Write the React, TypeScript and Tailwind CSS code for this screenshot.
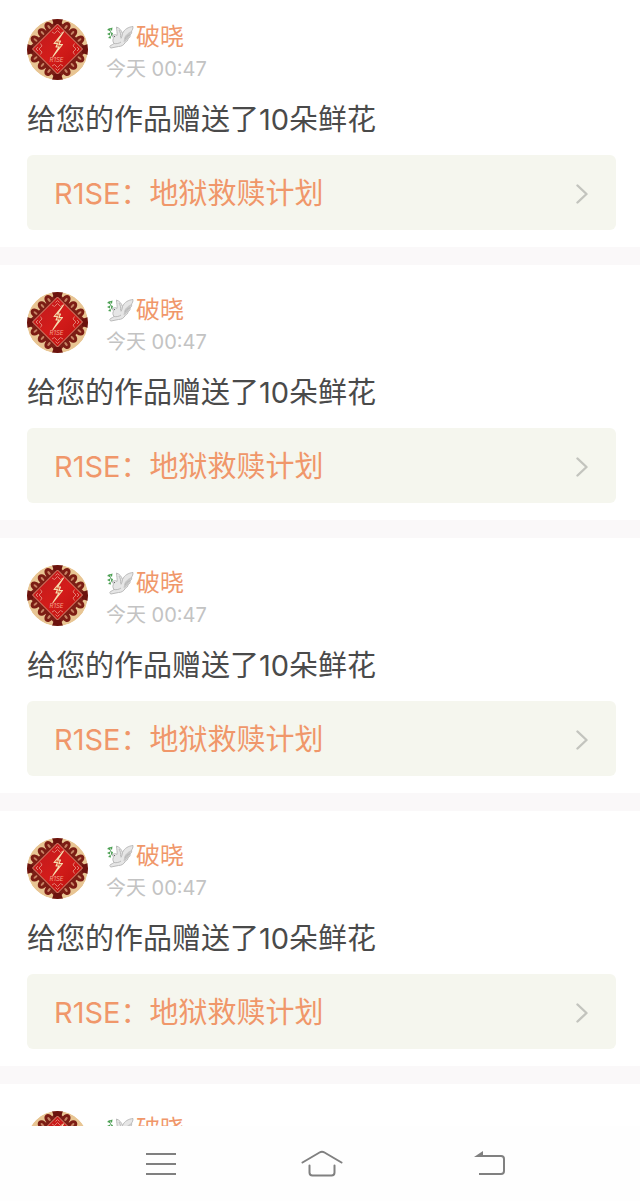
import React from 'react';

type Gift = {
  id: number;
  user: string;
  time: string;
  message: string;
  work: string;
};

const gifts: Gift[] = [1, 2, 3, 4, 5].map((id) => ({
  id,
  user: '破晓',
  time: '今天 00:47',
  message: '给您的作品赠送了10朵鲜花',
  work: 'R1SE：地狱救赎计划',
}));

// loops of the knot that stick out from the four sides of the diamond
const loops = [
  [22, 8, -38], [15.5, 14, -45], [8.5, 21, -52],
  [39, 8, 38], [45.5, 14, 45], [52.5, 21, 52],
  [8.5, 39, 52], [15.5, 46, 45], [22, 52, 38],
  [52.5, 39, -52], [45.5, 46, -45], [39, 52, -38],
];

const Avatar = () => (
  <svg viewBox="0 0 61 61" className="h-[61px] w-[61px] shrink-0 rounded-full" aria-hidden="true">
    <defs>
      <linearGradient id="lacquer" x1="0" y1="0" x2="1" y2="1">
        <stop offset="0" stopColor="#bd1a1d" />
        <stop offset="0.5" stopColor="#d31c1a" />
        <stop offset="1" stopColor="#bb100e" />
      </linearGradient>
    </defs>
    <circle cx="30.5" cy="30.5" r="30.5" fill="#e8c593" />
    <path d="M30.5 0 61 30.5 30.5 61 0 30.5Z" fill="#7c2018" />
    {loops.map(([x, y, turn]) => (
      <ellipse
        key={`${x}-${y}`}
        rx="2.6"
        ry="3.8"
        fill="#c58263"
        stroke="#7c1d14"
        strokeWidth="3"
        transform={`translate(${x} ${y}) rotate(${turn})`}
      />
    ))}
    <path d="M25 0h11l-2 6h-7ZM25 61h11l-2-6h-7ZM0 25v11l6-2v-7ZM61 25v11l-6-2v-7Z" fill="#6b120e" />
    <path d="M30.500 5 55.500 30 30.500 55 5.500 30Z" fill="url(#lacquer)" stroke="#dc8f76" strokeWidth="1" />
    <g fill="none" stroke="#e28a7c" strokeWidth="0.900">
      <path d="m25 13 2.500 1.500 3-3 3 3L36 13M28.500 10.500l2-2 2 2" />
      <path d="m13.500 24.500 1.500 2.500-3 3 3 3-1.500 2.500M11 28l-2 2 2 2" />
      <path d="m47.500 24.500-1.500 2.500 3 3-3 3 1.500 2.500M50 28l2 2-2 2" />
      <path d="m25 47 2.500-1.500 3 3 3-3L36 47M28.500 49.500l2 2 2-2" />
    </g>
    <path
      d="M36.500 13 27 24.500h3.500L29 28h3L26 37.500l9.500-12H32l1.500-3.500h-3Z"
      fill="#d9603f"
      stroke="#f6dcae"
      strokeWidth="1.100"
      strokeLinejoin="round"
    />
    <text x="29.500" y="43" textAnchor="middle" fontSize="6" fontStyle="italic" fontFamily="Inter, sans-serif" fill="#f6a58c">
      R1SE
    </text>
  </svg>
);

const Dove = () => (
  <svg viewBox="0 0 28 24" className="h-6 w-7 shrink-0" aria-hidden="true">
    <path d="M2 4c2 1 3 3 4 7" fill="none" stroke="#4f9a5a" strokeWidth="1" />
    <path d="M1 5 3.500 3l1 3ZM3.500 3.500l3-1L6 6ZM1 9l3-1.500v3ZM5 7.500l2 .5-1 3ZM2 13l2.500-2.500.5 3Z" fill="#4ba052" />
    <path
      d="M6 11.500c1-2 3.500-2.500 5-1 .5-3-.5-5-.5-8.500 3 1 5 3.500 6 6.500C18.500 4 22.500 2 27 1.500c0 2-.5 3.500-1.500 4.500.5 1.500 0 3-1.500 4 .5 1.500-.5 3-2 3.500 0 2-1 3-2.500 3.500-1.500 3-4 4.500-7 4.500L5 23c-1.500-.5-1.500-1.500-.5-2.500 1-.5 2.500-1 3.500-2C6.500 16.500 6.500 14 8 12.500Z"
      fill="#e6e6e6"
      stroke="#b4b4b4"
      strokeWidth="0.900"
      strokeLinejoin="round"
    />
    <path d="M25.500 6c-3 1.500-5.500 3.500-7 6l-1 5 2-.5 2.500-3 2-3.500Z" fill="#c6c6c6" />
    <path
      d="M13 5c1.500 2.500 2 5 1.500 7.500M16.500 8.500c-.5 2-.5 3.500-1.500 5M24 10c-2.500.5-4 2-5 4M8 18.500c2.500.5 5 0 7-1.500"
      fill="none"
      stroke="#b4b4b4"
      strokeWidth="0.900"
    />
    <circle cx="8.500" cy="11.500" r="0.600" fill="#555" />
  </svg>
);

const GiftCard = ({ gift }: { gift: Gift }) => (
  <li className="border-b-[18px] border-[#faf8f9] pt-[27px] pr-6 pb-[17px] pl-[27px]">
    <div className="flex items-start gap-[18px]">
      <Avatar />
      <div className="pt-0.5 leading-8">
        <p className="flex items-center gap-0.5 text-2xl leading-8 text-[#f0976a]">
          <Dove />
          {gift.user}
        </p>
        <p className="text-xl leading-8 text-[#c3c3c3]">{gift.time}</p>
      </div>
    </div>
    <p className="mt-[15px] text-[29px] leading-10 text-[#4a4a4a]">{gift.message}</p>
    <a href="#work" className="mt-[15px] flex h-[75px] items-center justify-between rounded-md bg-[#f5f6ee] pt-0.5 pr-7 pl-[27px] text-[29px] text-[#f0976a]">
      <span>{gift.work}</span>
      <svg viewBox="0 0 12 20" className="h-5 w-3" fill="none" stroke="#c3c4be" strokeWidth="2.400" strokeLinecap="round" strokeLinejoin="round" aria-hidden="true">
        <path d="m1.500 1.500 9 8.500-9 8.500" />
      </svg>
    </a>
  </li>
);

const NavBar = () => (
  <nav className="grid h-[75px] shrink-0 grid-cols-[162fr_160fr_176fr] bg-[#fefefe] pr-[62px] pl-20">
    <button type="button" aria-label="Menu" className="flex items-center justify-center">
      <svg viewBox="0 0 30 24" className="h-6 w-[30px]" stroke="#808080" strokeWidth="2" aria-hidden="true">
        <path d="M0 2h30M0 12h30M0 22h30" />
      </svg>
    </button>
    <button type="button" aria-label="Home" className="flex items-center justify-center">
      <svg viewBox="0 0 42 28" className="h-7 w-[42px]" fill="none" stroke="#808080" strokeWidth="2" strokeLinecap="round" aria-hidden="true">
        <path d="M1.500 12.500 18.500 2.500q2.500-1.500 5 0l17 10M8.500 15.500v7q0 3 3 3h19q3 0 3-3v-7" />
      </svg>
    </button>
    <button type="button" aria-label="Back" className="flex items-center justify-center">
      <svg viewBox="0 0 32 26" className="h-[26px] w-8" fill="none" stroke="#808080" strokeWidth="2" aria-hidden="true">
        <path d="M4 5h23q3 0 3 3v12q0 3-3 3H5" />
        <path d="M0 6 9 0v6Z" fill="#808080" stroke="none" />
      </svg>
    </button>
  </nav>
);

const App = () => (
  <div className="flex h-screen flex-col bg-white font-['Inter','Noto_Sans_CJK_SC',sans-serif]">
    <main className="min-h-0 flex-1 overflow-hidden">
      <ul className="-mt-2">
        {gifts.map((gift) => (
          <GiftCard key={gift.id} gift={gift} />
        ))}
      </ul>
    </main>
    <NavBar />
  </div>
);

export default App;
